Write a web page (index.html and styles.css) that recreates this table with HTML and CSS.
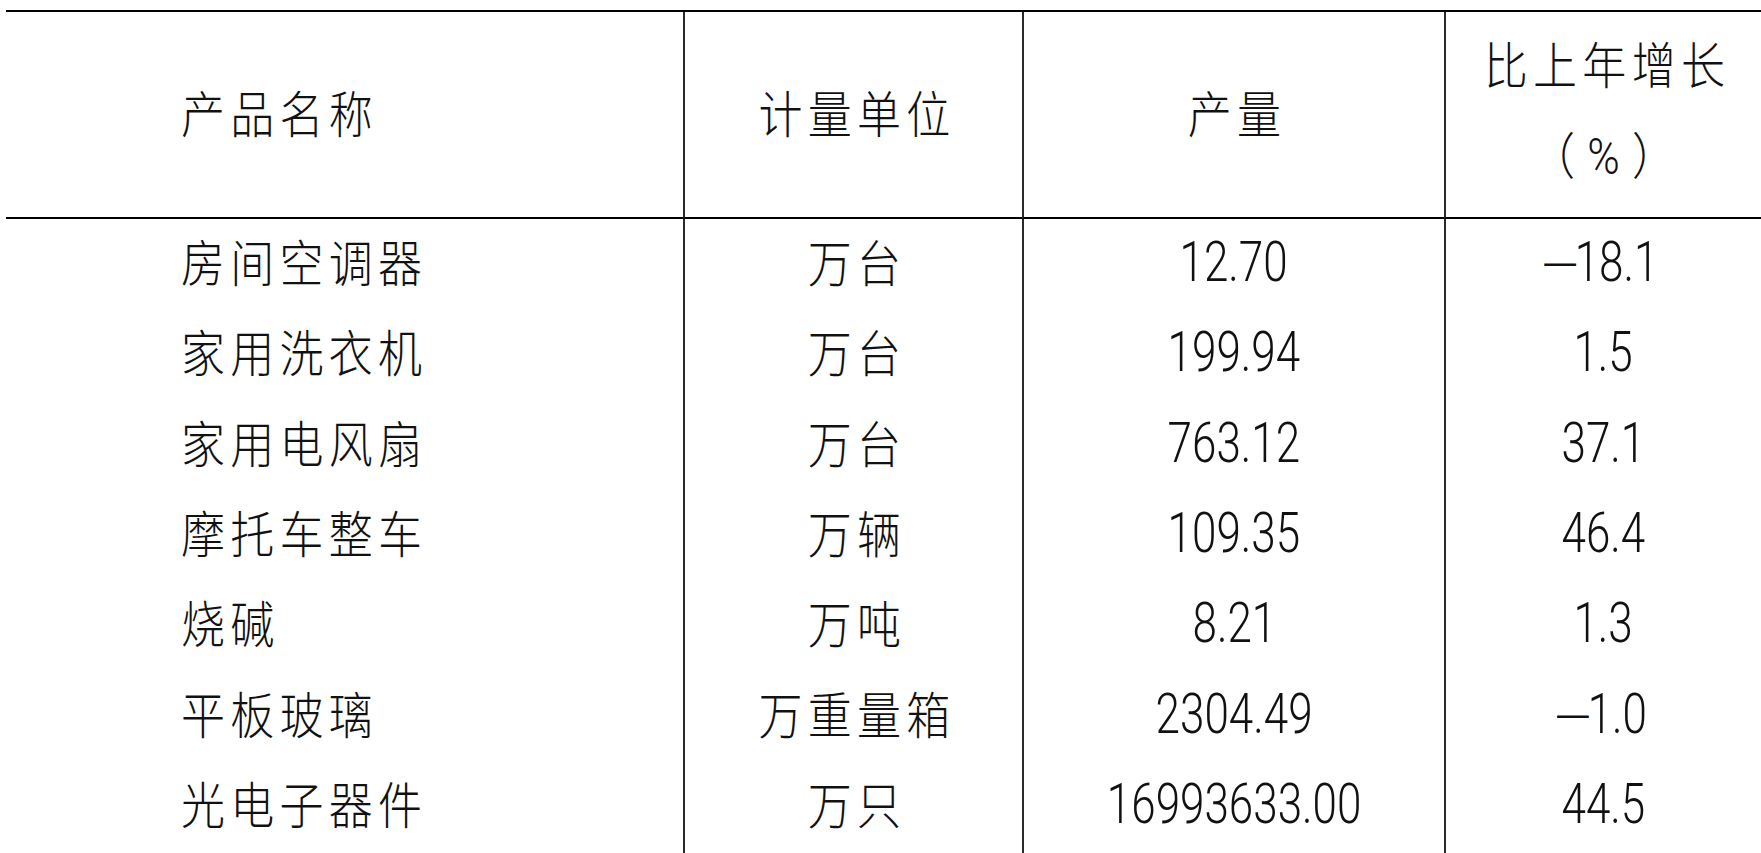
FILE: index.html
```html
<!DOCTYPE html>
<html lang="zh-CN">
<head>
<meta charset="utf-8">
<title>主要工业产品产量</title>
<link rel="stylesheet" href="styles.css">
</head>
<body>
<div class="table">
  <div class="cell c1 head"><span class="zh left">产品名称</span></div>
  <div class="cell c2 head"><span class="zh">计量单位</span></div>
  <div class="cell c3 head"><span class="zh">产量</span></div>
  <div class="cell c4 head">
    <div class="stack">
      <span class="zh">比上年增长</span>
      <span class="zh pct">（<span class="numin">%</span>）</span>
    </div>
  </div>

  <div class="cell c1"><span class="zh left">房间空调器</span></div>
  <div class="cell c2"><span class="zh">万台</span></div>
  <div class="cell c3"><span class="num">12.70</span></div>
  <div class="cell c4"><span class="num"><span class="minus">–</span>18.1</span></div>

  <div class="cell c1"><span class="zh left">家用洗衣机</span></div>
  <div class="cell c2"><span class="zh">万台</span></div>
  <div class="cell c3"><span class="num">199.94</span></div>
  <div class="cell c4"><span class="num">1.5</span></div>

  <div class="cell c1"><span class="zh left">家用电风扇</span></div>
  <div class="cell c2"><span class="zh">万台</span></div>
  <div class="cell c3"><span class="num">763.12</span></div>
  <div class="cell c4"><span class="num">37.1</span></div>

  <div class="cell c1"><span class="zh left">摩托车整车</span></div>
  <div class="cell c2"><span class="zh">万辆</span></div>
  <div class="cell c3"><span class="num">109.35</span></div>
  <div class="cell c4"><span class="num">46.4</span></div>

  <div class="cell c1"><span class="zh left">烧碱</span></div>
  <div class="cell c2"><span class="zh">万吨</span></div>
  <div class="cell c3"><span class="num">8.21</span></div>
  <div class="cell c4"><span class="num">1.3</span></div>

  <div class="cell c1"><span class="zh left">平板玻璃</span></div>
  <div class="cell c2"><span class="zh">万重量箱</span></div>
  <div class="cell c3"><span class="num">2304.49</span></div>
  <div class="cell c4"><span class="num"><span class="minus">–</span>1.0</span></div>

  <div class="cell c1"><span class="zh left">光电子器件</span></div>
  <div class="cell c2"><span class="zh">万只</span></div>
  <div class="cell c3"><span class="num">16993633.00</span></div>
  <div class="cell c4"><span class="num">44.5</span></div>

  <div class="cell c1"></div>
  <div class="cell c2"></div>
  <div class="cell c3"></div>
  <div class="cell c4"></div>
</div>
</body>
</html>
```

FILE: styles.css
```css
html, body {
  margin: 0;
  padding: 0;
  height: 853px;
  overflow: hidden;
  background: #ffffff;
  color: #000000;
}

.table {
  margin: 10px 0 0 6px;
  height: 843px;
  box-sizing: border-box;
  display: grid;
  grid-template-columns: 677px 339px 422px 1fr;
  grid-template-rows: 207px repeat(7, 90.33px) 1fr;
  border-top: 2px solid #000;
}

.cell {
  display: flex;
  align-items: center;
  justify-content: center;
  overflow: hidden;
}

.cell.head {
  border-bottom: 2px solid #000;
}

.c2, .c3, .c4 {
  border-left: 2px solid #2a2a2a;
}

.c1 {
  justify-content: flex-start;
  padding-left: 175px;
}

.zh {
  display: inline-block;
  font-family: "Noto Sans CJK SC", "Noto Sans CJK JP", sans-serif;
  font-weight: 300;
  font-size: 50px;
  line-height: 60px;
  letter-spacing: 6px;
  margin-right: -6px;
  margin-bottom: 8px;
  color: #111;
  transform: scaleX(0.88);
  transform-origin: center;
  white-space: nowrap;
}

.zh.left {
  transform-origin: left center;
}

.num {
  display: inline-block;
  font-family: Roboto, "Liberation Sans", sans-serif;
  font-weight: 300;
  font-size: 55px;
  line-height: 60px;
  margin-bottom: 4px;
  color: #111;
  transform: scaleX(0.8);
  transform-origin: center;
  white-space: nowrap;
}

.minus {
  display: inline-block;
  font-family: "Liberation Sans", sans-serif;
  transform: scale(1.3, 0.7);
  margin-right: 3px;
}

.stack {
  display: flex;
  flex-direction: column;
  align-items: center;
  margin-top: -10px;
}

.stack .zh {
  line-height: 90px;
  margin-bottom: 0;
}

.pct {
  letter-spacing: 0;
  margin-right: 0;
}

.numin {
  font-family: Roboto, "Liberation Sans", sans-serif;
  font-weight: 300;
  font-size: 50px;
  padding: 0 14px;
}
```
